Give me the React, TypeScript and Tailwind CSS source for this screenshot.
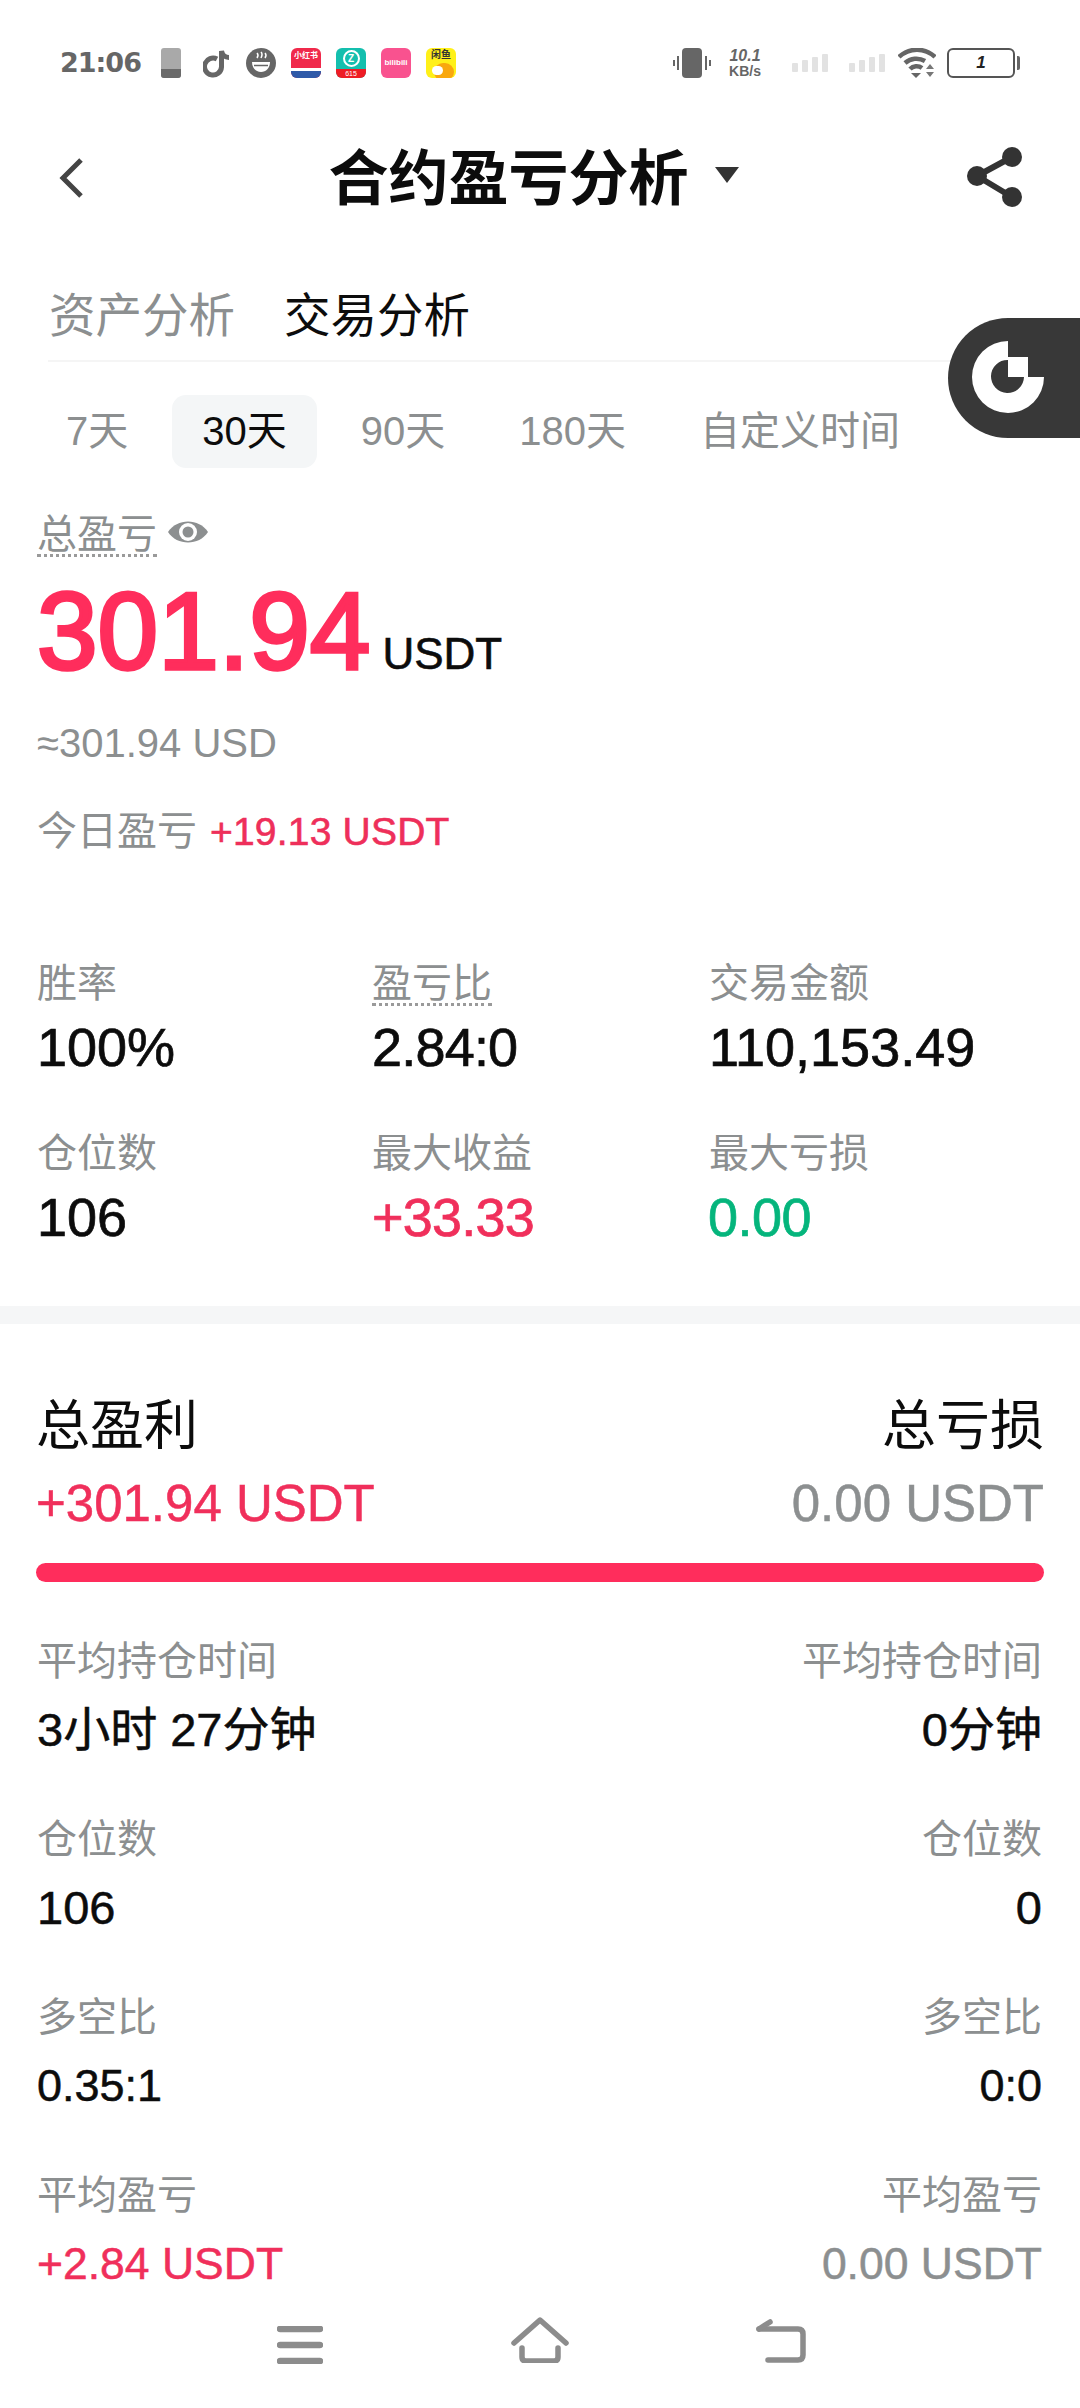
import React from "react";

const font = { fontFamily: '"Liberation Sans", "Noto Sans CJK SC", sans-serif' };

function Signal() {
  return (
    <svg width="36" height="18" viewBox="0 0 36 18" className="block">
      <rect x="0" y="9" width="6" height="9" rx="1" fill="#e2e2e2" />
      <rect x="10" y="6" width="6" height="12" rx="1" fill="#e2e2e2" />
      <rect x="20" y="3" width="6" height="15" rx="1" fill="#e2e2e2" />
      <rect x="30" y="0" width="6" height="18" rx="1" fill="#e2e2e2" />
    </svg>
  );
}

function StatusBar() {
  return (
    <div className="h-[126px] flex items-center pl-[60px] pr-[65px]">
      <div className="w-[82px] text-[27px] leading-[30px] font-bold text-[#666]" style={{ fontFamily: '"DejaVu Sans", sans-serif', letterSpacing: "-1px" }}>21:06</div>
      <div className="ml-[19px] relative w-[20px] h-[30px] rounded-[3px] bg-[#a9a9a9] overflow-hidden">
        <div className="absolute left-0 right-0 bottom-0 h-[9px] bg-[#6a6a6a]" />
      </div>
      <svg width="28" height="31" viewBox="0 0 28 31" className="ml-[22px]">
        <path d="M14 11 a8.5 8.5 0 1 0 4.5 8 V3 c1 4 4 6.500 7.500 6.500" fill="none" stroke="#666" strokeWidth="5" />
      </svg>
      <svg width="30" height="30" viewBox="0 0 30 30" className="ml-[15px]">
        <circle cx="15" cy="15" r="15" fill="#666" />
        <path d="M6 14 H24 C24 20 20 24 15 24 C10 24 6 20 6 14 Z" fill="#fff" />
        <path d="M8 17.500 H22" stroke="#666" strokeWidth="1.500" />
        <path d="M11 5 q2 2 0 5 M15 4 q2 2 0 6 M19 5 q2 2 0 5" stroke="#fff" strokeWidth="1.500" fill="none" />
      </svg>
      <div className="ml-[15px] w-[30px] h-[30px] rounded-[6px] overflow-hidden bg-[#f0294b] flex flex-col">
        <div className="h-[20px] text-[8px] leading-[16px] text-white text-center font-bold whitespace-nowrap" style={font}>小红书</div>
        <div className="h-[3px] bg-white" />
        <div className="flex-1 bg-[#2f5aa8]" />
      </div>
      <div className="ml-[15px] w-[30px] h-[30px] rounded-[6px] overflow-hidden bg-[#14bfae] flex flex-col items-center">
        <div className="mt-[2px] w-[17px] h-[17px] rounded-full border-[2px] border-white text-[10px] leading-[13px] text-white text-center font-bold" style={font}>Z</div>
        <div className="mt-[2px] w-full flex-1 bg-[#ee1c25] text-[7px] leading-[9px] text-white text-center" style={font}>615</div>
      </div>
      <div className="ml-[15px] w-[30px] h-[30px] rounded-[6px] bg-[#f9528f] text-[8px] leading-[30px] text-white text-center font-bold overflow-hidden" style={font}>bilibili</div>
      <div className="ml-[15px] relative w-[30px] h-[30px] rounded-[6px] bg-[#fff019] overflow-hidden">
        <div className="text-[10px] leading-[14px] text-[#333] text-center font-bold whitespace-nowrap" style={font}>闲鱼</div>
        <div className="absolute left-[8px] top-[15px] w-[20px] h-[18px] rounded-full bg-[#f9a80e]" />
        <div className="absolute left-[6px] top-[18px] w-[11px] h-[9px] rounded-full bg-white" />
      </div>
      <div className="flex-1" />
      <svg width="38" height="30" viewBox="0 0 38 30">
        <rect x="9" y="0" width="20" height="30" rx="4" fill="#666" />
        <path d="M5 8 V22 M1 12 V18 M33 8 V22 M37 12 V18" stroke="#666" strokeWidth="2" />
      </svg>
      <div className="ml-[15px] w-[38px] text-[#666] font-bold" style={font}>
        <div className="text-[16px] leading-[15px] italic text-center">10.1</div>
        <div className="text-[14px] leading-[16px] text-center whitespace-nowrap">KB/s</div>
      </div>
      <div className="ml-[28px]"><Signal /></div>
      <div className="ml-[21px]"><Signal /></div>
      <svg width="38" height="30" viewBox="0 0 38 30" className="ml-[13px]">
        <path d="M1 9 A26 26 0 0 1 37 9" fill="none" stroke="#666" strokeWidth="4.500" />
        <path d="M7 15 A17 17 0 0 1 27 13" fill="none" stroke="#666" strokeWidth="4.500" />
        <path d="M12 21 A9 9 0 0 1 24 20" fill="none" stroke="#666" strokeWidth="4.500" />
        <path d="M13 25 H23 L18 30 Z" fill="#666" />
        <path d="M32 16 L36 21 H28 Z M28 24 H36 L32 29 Z" fill="#777" />
      </svg>
      <div className="ml-[11px] relative w-[68px] h-[30px] rounded-[6px] border-[2px] border-[#555] text-[17px] leading-[26px] font-bold italic text-[#222] text-center" style={font}>
        1
        <div className="absolute right-[-7px] top-[6px] w-[3px] h-[14px] bg-[#666] rounded-r-[2px]" />
      </div>
    </div>
  );
}

function Header() {
  return (
    <div className="h-[108px] relative flex items-center justify-center">
      <svg width="26" height="42" viewBox="0 0 26 42" className="absolute left-[58px] top-[31px]">
        <path d="M23 3 L5 21 L23 39" fill="none" stroke="#444" strokeWidth="5" />
      </svg>
      <div className="ml-[-13px] flex items-center">
        <div className="text-[60px] leading-[90px] font-bold text-[#0c0c0c] whitespace-nowrap">合约盈亏分析</div>
        <svg width="24" height="16" viewBox="0 0 24 16" className="ml-[26px] mt-[-10px]">
          <path d="M0 0 H24 L12 16 Z" fill="#333" />
        </svg>
      </div>
      <svg width="56" height="60" viewBox="0 0 56 60" className="absolute left-[967px] top-[21px]">
        <path d="M45 10 L10 29 L45 50" fill="none" stroke="#333" strokeWidth="6" />
        <circle cx="45" cy="10" r="10" fill="#333" />
        <circle cx="10" cy="29" r="10" fill="#333" />
        <circle cx="45" cy="50" r="10" fill="#333" />
      </svg>
    </div>
  );
}

function Tabs() {
  return (
    <div className="ml-[48px] h-[128px] flex items-end gap-[49px] pb-[19px] border-b-[2px] border-[#f5f5f5] text-[46.5px] leading-[50px]">
      <span className="ml-[1px] text-[#8c8f90]">资产分析</span>
      <span className="text-[#0c0c0c]">交易分析</span>
    </div>
  );
}

function Pills() {
  const items = ["7天", "30天", "90天", "180天", "自定义时间"];
  return (
    <div className="mt-[33px] pl-[36px] flex gap-[14px]">
      {items.map((t) => (
        <div key={t} className={t === "30天" ? "h-[73px] px-[30px] rounded-[14px] bg-[#f4f6f7] text-[40px] leading-[73px] text-[#0c0c0c]" : "h-[73px] px-[30px] text-[40px] leading-[73px] text-[#8c8f90]"}>{t}</div>
      ))}
    </div>
  );
}

function Stat({ label, value, color, dotted }: { label: string; value: string; color?: string; dotted?: boolean }) {
  return (
    <div className="h-[170px]">
      <div className="h-[46px] text-[40px] leading-[46px] text-[#8c8f90]">
        <span className={dotted ? "border-b-[3px] border-dotted border-[#9a9a9a] inline-block leading-[40px]" : ""}>{label}</span>
      </div>
      <div className={"mt-[10px] text-[54px] leading-[62px] whitespace-nowrap [-webkit-text-stroke:0.7px] " + (color ?? "text-[#0c0c0c]")}>{value}</div>
    </div>
  );
}

function Row({ left, right, size }: { left: [string, string, string?]; right: [string, string, string?]; size?: string }) {
  return (
    <div className="h-[178px] flex justify-between">
      {[left, right].map((c, i) => (
        <div key={i} className={i ? "text-right" : ""}>
          <div className="h-[46px] text-[40px] leading-[46px] text-[#8c8f90]">{c[0]}</div>
          <div className={"mt-[19px] leading-[54px] whitespace-nowrap [-webkit-text-stroke:0.5px] " + (size ?? "text-[47px]") + " " + (c[2] ?? "text-[#0c0c0c]")}>{c[1]}</div>
        </div>
      ))}
    </div>
  );
}

export default function App() {
  return (
    <div className="relative w-[1080px] h-[2408px] bg-white overflow-hidden flex flex-col" style={font}>
      <StatusBar />
      <Header />
      <Tabs />
      <Pills />

      <div className="absolute right-0 top-[318px] w-[132px] h-[120px] rounded-l-[60px] bg-[#383838]">
        <svg width="76" height="76" viewBox="0 0 76 76" className="absolute left-[22px] top-[21px]">
          <path d="M38 2 A36 36 0 1 0 74 38 H54 A16.500 16.500 0 1 1 38 21 Z" fill="#fff" />
          <rect x="38" y="18" width="20" height="20" fill="#fff" />
        </svg>
      </div>

      <div className="mt-[45px] px-[37px]">
        <div className="flex items-center h-[44px]">
          <span className="text-[40px] leading-[40px] text-[#8c8f90] border-b-[3px] border-dotted border-[#9a9a9a]">总盈亏</span>
          <svg width="42" height="30" viewBox="0 0 42 30" className="ml-[10px] mt-[-6px]">
            <path d="M1 15 C10 1 32 1 41 15 C32 29 10 29 1 15 Z" fill="#8c8f90" />
            <circle cx="21" cy="15" r="9" fill="#fff" />
            <circle cx="21" cy="15" r="5.500" fill="#8c8f90" />
          </svg>
        </div>
        <div className="mt-[13px] flex items-baseline h-[122px]">
          <span className="text-[109px] leading-[122px] text-[#ff2d5c] [-webkit-text-stroke:3.5px]">301.94</span>
          <span className="ml-[12px] text-[44px] leading-[50px] text-[#0c0c0c] [-webkit-text-stroke:0.6px]">USDT</span>
        </div>
        <div className="mt-[28px] text-[40px] leading-[46px] text-[#8c8f90]">≈301.94 USD</div>
        <div className="mt-[42px] flex items-baseline h-[46px]">
          <span className="text-[40px] leading-[46px] text-[#8c8f90]">今日盈亏</span>
          <span className="ml-[13px] text-[39px] leading-[46px] text-[#ee2f5a] [-webkit-text-stroke:0.6px] tracking-[0.2px]">+19.13 USDT</span>
        </div>
      </div>

      <div className="mt-[106px] px-[37px] grid grid-cols-[335px_337px_1fr]">
        <Stat label="胜率" value="100%" />
        <Stat label="盈亏比" value="2.84:0" dotted color="text-[#0c0c0c] tracking-[-0.8px]" />
        <Stat label="交易金额" value="110,153.49" />
        <Stat label="仓位数" value="106" />
        <Stat label="最大收益" value="+33.33" color="text-[#f02f5b] tracking-[-0.8px]" />
        <Stat label="最大亏损" value="0.00" color="text-[#05b57c] tracking-[-0.5px] ml-[-1px]" />
      </div>

      <div className="h-[18px] mt-[6px] bg-[#f5f6f7]" />

      <div className="pl-[36px] pr-[36px] pt-[70px]">
        <div className="flex justify-between text-[54px] leading-[64px] text-[#0c0c0c]">
          <span>总盈利</span>
          <span>总亏损</span>
        </div>
        <div className="mt-[17px] flex justify-between text-[51px] leading-[58px] [-webkit-text-stroke:0.5px]">
          <span className="text-[#f02f5b]">+301.94 USDT</span>
          <span className="text-[#8c8f90]">0.00 USDT</span>
        </div>
        <div className="mt-[30px] h-[19px] rounded-full bg-[#ff2d5c]" />
      </div>

      <div className="mt-[56px] pl-[37px] pr-[38px]">
        <Row left={["平均持仓时间", "3小时 27分钟"]} right={["平均持仓时间", "0分钟"]} />
        <Row left={["仓位数", "106"]} right={["仓位数", "0"]} />
        <Row left={["多空比", "0.35:1"]} right={["多空比", "0:0"]} size="text-[45px]" />
        <Row left={["平均盈亏", "+2.84 USDT", "text-[#f02f5b]"]} right={["平均盈亏", "0.00 USDT", "text-[#8c8f90]"]} size="text-[44.5px]" />
      </div>

      <div className="absolute left-0 right-0 bottom-0 h-[92px] bg-white">
        <svg width="46" height="38" viewBox="0 0 46 38" className="absolute left-[277px] top-[10px]">
          <path d="M3 3 H43 M3 19 H43 M3 35 H43" stroke="#8c8c8c" strokeWidth="6.500" strokeLinecap="round" />
        </svg>
        <svg width="58" height="46" viewBox="0 0 58 46" className="absolute left-[511px] top-[1px]">
          <path d="M3 26 L29 3 L55 26" fill="none" stroke="#8c8c8c" strokeWidth="5.500" strokeLinecap="round" strokeLinejoin="round" />
          <path d="M11 31 V40 Q11 44 15 44 H43 Q47 44 47 40 V31" fill="none" stroke="#8c8c8c" strokeWidth="5.500" strokeLinecap="round" />
        </svg>
        <svg width="50" height="46" viewBox="0 0 50 46" className="absolute left-[756px] top-[1px]">
          <path d="M3 12 H42 Q47 12 47 17 V38 Q47 43 42 43 H12" fill="none" stroke="#8c8c8c" strokeWidth="5.500" strokeLinecap="round" />
          <path d="M3 12 L14 5" fill="none" stroke="#8c8c8c" strokeWidth="5.500" strokeLinecap="round" />
        </svg>
      </div>
    </div>
  );
}
